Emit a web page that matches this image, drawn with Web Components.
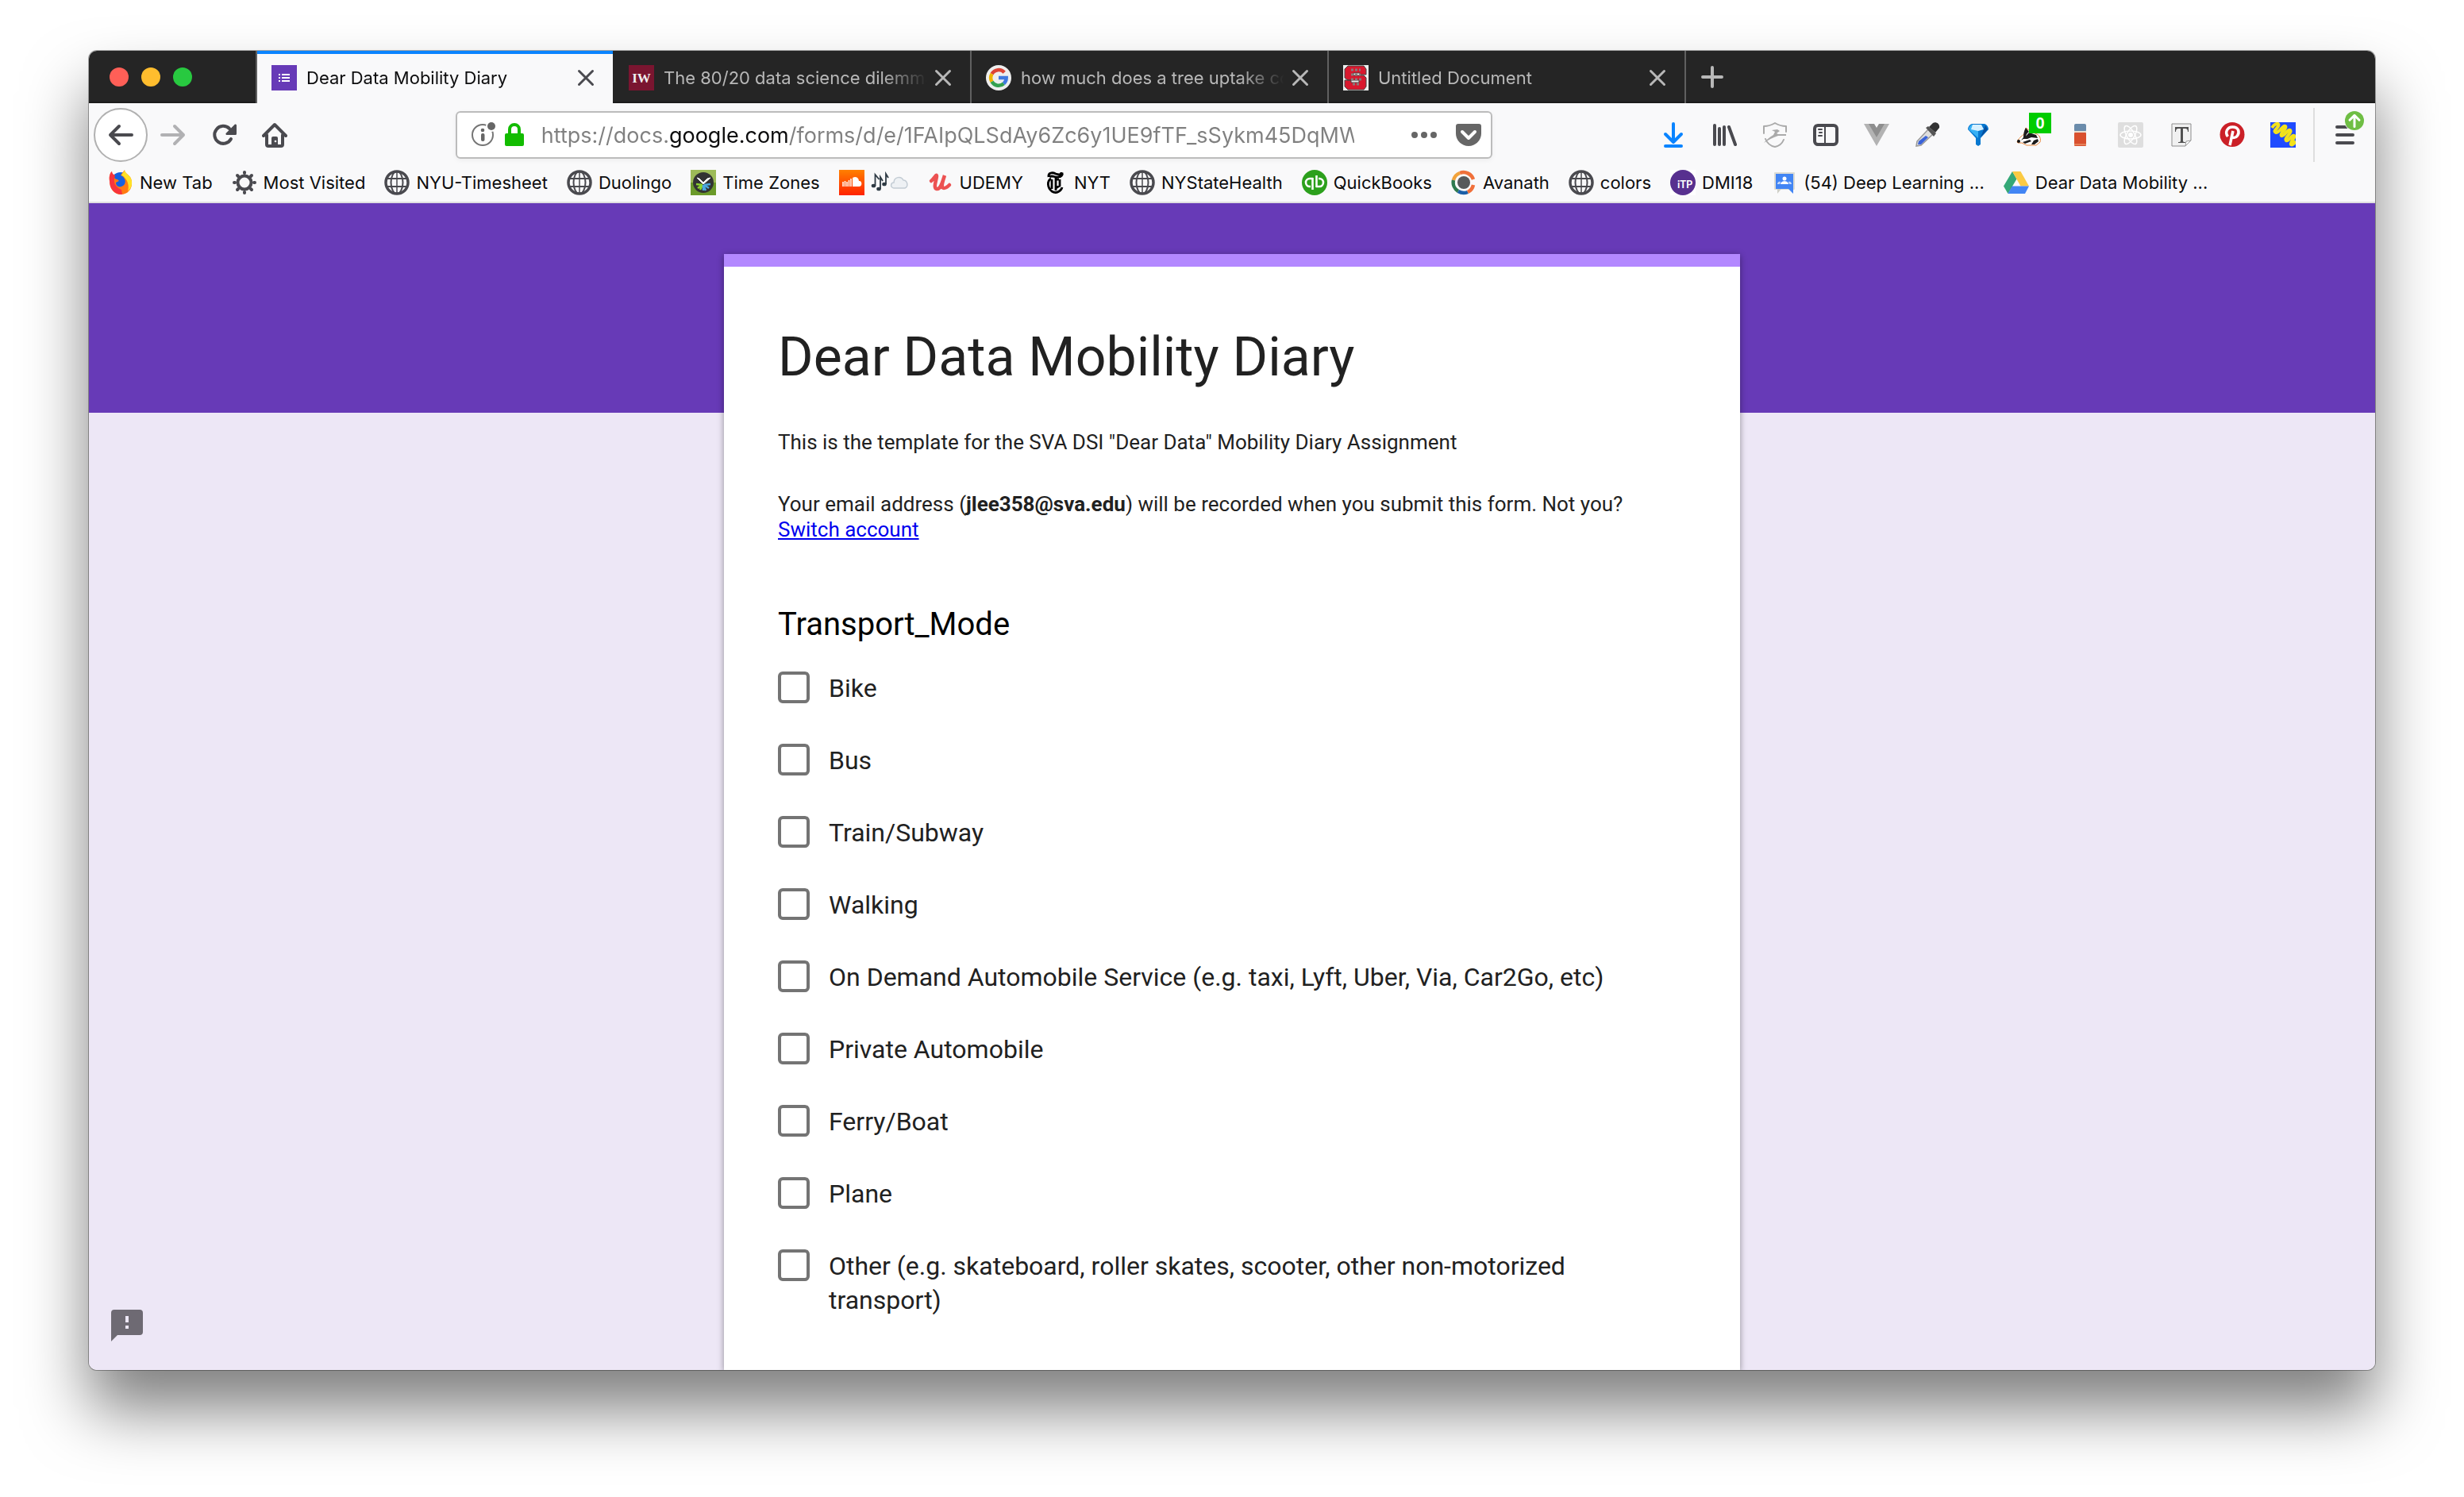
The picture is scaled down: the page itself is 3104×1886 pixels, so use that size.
<!DOCTYPE html>
<html lang="en">
<head>
<meta charset="utf-8">
<title>Dear Data Mobility Diary</title>
<style>
  html, body { margin: 0; height: 100%; background: #fff; }
  body { box-sizing: border-box; padding: 64px 112px 160px; overflow: hidden; font-family: Inter, "Liberation Sans", sans-serif; }
</style>
</head>
<body>
<browser-window>
  <tab-strip slot="tabs">
    <browser-tab icon="forms" active>Dear Data Mobility Diary</browser-tab>
    <browser-tab icon="iw">The 80/20 data science dilemma</browser-tab>
    <browser-tab icon="google">how much does a tree uptake co2</browser-tab>
    <browser-tab icon="wolf">Untitled Document</browser-tab>
  </tab-strip>
  <nav-bar slot="nav"></nav-bar>
  <bookmarks-bar slot="bookmarks">
    <bookmark-item icon="firefox">New Tab</bookmark-item>
    <bookmark-item icon="gear">Most Visited</bookmark-item>
    <bookmark-item icon="globe">NYU-Timesheet</bookmark-item>
    <bookmark-item icon="globe">Duolingo</bookmark-item>
    <bookmark-item icon="clock">Time Zones</bookmark-item>
    <bookmark-item icon="soundcloud"><ui-icon name="notes" wide></ui-icon></bookmark-item>
    <bookmark-item icon="udemy">UDEMY</bookmark-item>
    <bookmark-item icon="nyt">NYT</bookmark-item>
    <bookmark-item icon="globe">NYStateHealth</bookmark-item>
    <bookmark-item icon="qb">QuickBooks</bookmark-item>
    <bookmark-item icon="avanath">Avanath</bookmark-item>
    <bookmark-item icon="globe">colors</bookmark-item>
    <bookmark-item icon="itp">DMI18</bookmark-item>
    <bookmark-item icon="groups">(54) Deep Learning ...</bookmark-item>
    <bookmark-item icon="drive">Dear Data Mobility ...</bookmark-item>
  </bookmarks-bar>
  <forms-page>
    <form-card>
      <span slot="title">Dear Data Mobility Diary</span>
      <span slot="description">This is the template for the SVA DSI "Dear Data" Mobility Diary Assignment</span>
      <span slot="account">Your email address (<b>jlee358@sva.edu</b>) will be recorded when you submit this form. Not you? <a href="#switch">Switch account</a></span>
      <span slot="question">Transport_Mode</span>
      <check-option>Bike</check-option>
      <check-option>Bus</check-option>
      <check-option>Train/Subway</check-option>
      <check-option>Walking</check-option>
      <check-option>On Demand Automobile Service (e.g. taxi, Lyft, Uber, Via, Car2Go, etc)</check-option>
      <check-option>Private Automobile</check-option>
      <check-option>Ferry/Boat</check-option>
      <check-option>Plane</check-option>
      <check-option>Other (e.g. skateboard, roller skates, scooter, other non-motorized transport)</check-option>
    </form-card>
  </forms-page>
</browser-window>

<script>
const stroke = (d, w = 4, c = 'currentColor') =>
  `<path d="${d}" fill="none" stroke="${c}" stroke-width="${w}" stroke-linecap="round" stroke-linejoin="round"/>`;

const ICONS = {
  back: stroke('M30 16H3M14 5 3 16l11 11'),
  forward: stroke('M2 16h27M18 5l11 11-11 11'),
  reload: stroke('M25 21A11 11 0 1 1 23 8') + '<path d="M30 2.500a1.500 1.500 0 0 1 2 1.500v10.500a1.500 1.500 0 0 1-1.500 1.500H20a1.400 1.400 0 0 1-1-2.500z" fill="currentColor"/>',
  home: stroke('M2 17 16 3l14 14M6 16v12a2 2 0 0 0 2 2h16a2 2 0 0 0 2-2V16') + '<path d="M12 30V20a2 2 0 0 1 2-2h4a2 2 0 0 1 2 2v10z" fill="currentColor"/><circle cx="17" cy="24" r="1.300" fill="#f9f9fa"/>',
  close: stroke('M7.500 7.500l17 17M24.500 7.500l-17 17', 3),
  plus: stroke('M16 4v24M4 16h24', 4),
  info: '<circle cx="14" cy="16" r="13" fill="none" stroke="#757575" stroke-width="2"/><circle cx="14" cy="10" r="2.300" fill="#666"/><rect x="12" y="14" width="4.500" height="10" rx="2" fill="#666"/><circle cx="25" cy="5" r="7" fill="#fff"/><circle cx="25" cy="5" r="5" fill="#666"/>',
  lock: '<path d="M10 15V9a6 6 0 0 1 12 0v6" fill="none" stroke="#12bc00" stroke-width="4"/><rect x="4" y="14" width="24" height="16" rx="2" fill="#12bc00"/>',
  dots: '<g fill="#666"><circle cx="4" cy="16" r="4"/><circle cx="16" cy="16" r="4"/><circle cx="28" cy="16" r="4"/></g>',
  pocket: '<path d="M3 2h26a3 3 0 0 1 3 3v9a16 16 0 0 1-32 0V5a3 3 0 0 1 3-3z" fill="#666"/>' + stroke('M8 12l8 8 8-8', 4, '#fff'),
  download: stroke('M16 2v23M6 15l10 10 10-10M6 30h20', 4, '#0a84ff'),
  library: '<g fill="#4a4a4f"><rect x="2" y="2" width="4" height="28" rx="2"/><rect x="8" y="6" width="4" height="24" rx="2"/><rect x="14" y="4" width="4" height="26" rx="2"/></g>' + stroke('M22 6l8 22', 4, '#4a4a4f'),
  shield: stroke('M2 14V5c5 0 9-1 14-4 5 3 9 4 14 4v7M4 21c2 5 6 9 12 10 5-1 9-4 11-9', 2, '#aaa') + '<path d="M12 10l7-1 3 2-4 3 2 1h10v2H20c-6 2-12 5-18 9 3-4 7-7 12-10l2-4z" fill="#aaa"/>',
  sidebar: '<rect x="2" y="4" width="28" height="24" rx="4" fill="none" stroke="#4a4a4f" stroke-width="4"/><path d="M15 4v24" stroke="#4a4a4f" stroke-width="2"/>' + stroke('M7 9h4M8 13h3M7 17h4', 2, '#4a4a4f'),
  vue: '<path d="M0 2h12l4 7 4-7h12L16 30z" fill="#b3b3b3"/><path d="M6 2h7l3 5 3-5h7L16 19z" fill="#8e8e8e"/>',
  dropper: '<path d="M2 30l1-6L17 9l6 6L8 29z" fill="#ddd" stroke="#999" stroke-width="1.500"/><path d="M4 28l1-4 9-7 3 2-9 9z" fill="#3a63d8"/><path d="M14 7l3-2 10 9-3 4z" fill="#555"/><path d="M18 6l5-5c4-2 9 1 8 6l-5 6z" fill="#333"/>',
  gem: '<path d="M8 2h16c3 1 5 4 5 7l-10 11v8l-3 2-3-2v-8L3 9c0-3 2-6 5-7z" fill="#0878d0"/><path d="M8 3h8v17L4 9c0-3 2-5 4-6z" fill="#36b0f5"/><path d="M9 3h11l3 6-7 2-9-2z" fill="#d5f0ff"/><path d="M19 19l9-10-3-5z" fill="#0650a0"/>',
  badger: '<path d="M1 25c1-4 6-8 9-10l2-8 5 4 9 4c4 2 5 6 4 10l-5 4-12 0-6-3-5 0z" fill="#fff" stroke="#e8873a" stroke-width="1"/><path d="M9 19c0-5 1-9 3-12l4 5c-3 2-4 4-4 7l-6 4zM16 13l9 3 2 4-8-1-5 2-5 0zM8 25l9-3 2 2-8 3zM22 23l5-2 1 3-5 4-4 0z" fill="#1c1c1c"/><circle cx="3" cy="24" r="2" fill="#111"/>',
  eraser: '<rect x="9" y="2" width="15" height="10" rx="2" fill="#6b8cab"/><rect x="9" y="11" width="15" height="2" fill="#e9ddd0"/><rect x="9" y="13" width="15" height="17" rx="1" fill="#d9502e"/><path d="M9 28h15" stroke="#f0b080" stroke-width="1"/>',
  react: '<rect width="32" height="32" rx="2" fill="#dedede"/><g fill="none" stroke="#fff" stroke-width="1.500"><ellipse cx="16" cy="16" rx="13" ry="5"/><ellipse cx="16" cy="16" rx="13" ry="5" transform="rotate(60 16 16)"/><ellipse cx="16" cy="16" rx="13" ry="5" transform="rotate(120 16 16)"/></g><circle cx="16" cy="16" r="3" fill="#fff"/>',
  type: '<path d="M4 2h24v21l-7 7H4z" fill="#f1f1f1" stroke="#8d8d8d" stroke-width="1"/><path d="M28 23l-7 7 1-6z" fill="#fff" stroke="#999"/><path d="M8 6h17v6h-1c0-3-1-4-3-4h-3v15c0 2 1 2 3 2v1h-9v-1c2 0 3 0 3-2V8h-3c-2 0-3 1-3 4H8z" fill="#505050"/>',
  pinterest: '<circle cx="16" cy="15.500" r="15.500" fill="#cb2027"/><path d="M10.500 18c-4-5-1-12 6-12 8 0 9 7 6 11-2 3-6 3-7.500 1M17 11l-4 18" fill="none" stroke="#fff" stroke-width="3.500"/>',
  scribble: '<rect width="32" height="32" fill="#1f4bff"/><path d="M2 7C6 1 12 0 10 5 8 9 3 11 7 13c4 1 9-10 12-8 3 3-8 9-5 12 3 2 8-9 11-7 3 3-8 10-5 13 3 2 7-8 10-6 2 3-6 8-4 11 2 2 5-3 6-4" fill="none" stroke="#f3e21b" stroke-width="4" stroke-linejoin="round"/>',
  menu: stroke('M6 6h20M6 16h20M6 26h20', 4),
  up: '<circle cx="16" cy="16" r="16" fill="#6fbe44"/>' + stroke('M16 26V8M8 15l8-8 8 8', 4, '#fff'),
  feedback: '<path d="M8 4h32a4 4 0 0 1 4 4v24a4 4 0 0 1-4 4H12l-8 8V8a4 4 0 0 1 4-4z" fill="#6e6a73"/><path d="M22 12h4v8h-4zM22 24h4v4h-4z" fill="#ede7f6"/>',

  forms: '<rect width="32" height="32" fill="#673ab7"/><g fill="#fff"><rect x="9" y="11" width="2" height="2"/><rect x="9" y="15" width="2" height="2"/><rect x="9" y="19" width="2" height="2"/><rect x="13" y="11" width="10" height="2"/><rect x="13" y="15" width="10" height="2"/><rect x="13" y="19" width="10" height="2"/></g>',
  iw: '<rect width="32" height="32" fill="#7a1530"/><text x="16" y="22" font-family="Liberation Serif, serif" font-weight="700" font-size="17" text-anchor="middle" fill="#eee">IW</text>',
  google: '<circle cx="16" cy="16" r="16" fill="#eee"/><g fill="none" stroke-width="4.500"><path d="M23.200 9.200A9.800 9.800 0 0 0 7.500 11.100" stroke="#dd4436"/><path d="M7.500 11.100a9.800 9.800 0 0 0 0 9.800" stroke="#f0b400"/><path d="M7.500 20.900a9.800 9.800 0 0 0 15 2.400" stroke="#34a150"/><path d="M22.500 23.300A9.800 9.800 0 0 0 25.700 16H16" stroke="#4079e0"/></g>',
  wolf: '<rect width="32" height="32" fill="#eee"/><path d="M6 1h20l3 4v7h-8v-2h-8v3h13l3 3v11l-3 4H6l-4-4v-8h8v3h10v-3H6l-4-3V5z" fill="#d9182e" stroke="#444"/><path d="M10 6h12M10 12h12M10 18h14M12 24h9" stroke="#8a7a7a" stroke-width="3" stroke-dasharray="3 2"/>',
  firefox: '<circle cx="16" cy="16" r="13" fill="#1560e0"/><path d="M2 14C1 8 3 3 5 2c0 3 2 4 4 5-2 3 0 5 3 5l2 2-4 2c0 5 5 7 9 4 4-3 3-8 1-10-1-2-2-2-4-3 1-3 4-5 5-7 0 4 4 5 7 9 5 8 1 22-12 22C8 31 2 24 2 14z" fill="#ff7a12"/><path d="M21 0c0 4 4 5 7 9 4 7 2 14-3 18 2-7 0-13-4-17-1-2-2-2-4-3 1-3 4-5 4-7z" fill="#ffe226"/><path d="M2 14C1 8 3 3 5 2c0 3 2 4 4 5-3 8 0 15 8 18l1 6C8 31 2 24 2 14z" fill="#f5174f" opacity=".7"/>',
  gear: '<circle cx="16" cy="16" r="8.500" fill="none" stroke="#4a4a4f" stroke-width="4"/>' + stroke('M16 4V3M16 29v-1M4 16H3M29 16h-1M7 7l1 1M24 24l1 1M7 25l1-1M24 8l1-1', 4, '#4a4a4f'),
  globe: '<g fill="none" stroke="#4a4a4f"><circle cx="16" cy="16" r="14" stroke-width="3.500"/><ellipse cx="16" cy="16" rx="7.500" ry="14" stroke-width="2"/><path d="M16 2v28" stroke-width="1.500"/><path d="M4 11h24M4 21h24" stroke-width="2"/></g>',
  clock: '<rect width="32" height="32" fill="#6b9a2a"/><rect width="32" height="16" fill="#9dbb58"/><circle cx="16" cy="16" r="13" fill="#333"/><path d="M16 18L8 10l3 1 5 5 5-5 4-1z" fill="#fff" stroke="#fff"/><path d="M15 19l-8-1M15 19l-6 4M15 19l-3 6" stroke="#8bd42f" stroke-width="2.500"/><path d="M17 19l8-1M17 19l6 4M16 19l3 7M16 19v7" stroke="#4ba8e0" stroke-width="2.500"/>',
  soundcloud: '<defs><linearGradient id="s" x2="0" y2="1"><stop stop-color="#ff8000"/><stop offset="1" stop-color="#ff2200"/></linearGradient></defs><rect width="32" height="32" fill="url(#s)"/><path d="M5 15v6M7.500 14v7M10 15v6M12.500 13v8M15 11v10" stroke="#fff" stroke-width="1.500"/><path d="M17 10c5-3 8 1 8 4 4-1 5 7 0 7h-8z" fill="#fff"/>',
  notes: '<g fill="#2e3a44"><ellipse cx="3.500" cy="20" rx="2.800" ry="2.300"/><ellipse cx="10" cy="24" rx="2.800" ry="2.300"/><ellipse cx="17" cy="18" rx="2.800" ry="2.300"/></g><path d="M5.500 20V6l5 6M12 24V9l3 5M19 18V5l3 5" fill="none" stroke="#2e3a44" stroke-width="1.800"/><path d="M29 23c-5-1-4-7 0-7 0-7 9-9 12-3 5 0 7 8 2 10z" fill="#eef1f4" stroke="#c3ccd4" stroke-width="1.500"/>',
  udemy: '<path d="M4 14c4-3 7-10 7-6s-5 15 0 16c4 1 7-7 10-17-3 9-5 16-1 16 3 0 5-2 7-4" fill="none" stroke="#ec5252" stroke-width="4.500" stroke-linecap="round"/>',
  nyt: '<path d="M8 9c-1-6 5-6 9-4 3 1 7 2 7-2M9 9c3-3 7 1 11 0 4 0 6-3 5-5" fill="none" stroke="#000" stroke-width="2.800"/><path d="M11 11c-5 3-5 11 1 16 6 4 12-1 13-5M17 9v17M12 12v12M21 12h-4M22 12v8l-5 3" fill="none" stroke="#000" stroke-width="2.800"/>',
  qb: '<circle cx="16" cy="16" r="16" fill="#2ca01c"/><g fill="none" stroke="#fff" stroke-width="2.600"><path d="M14 11h-4a4.500 4.500 0 0 0 0 10h1M13.500 10v15M18 21h4a4.500 4.500 0 0 0 0-10h-1M18.500 22V7"/></g>',
  avanath: '<g fill="none" stroke-width="4.500"><path d="M28 12A13 13 0 0 0 11 4" stroke="#f0703a"/><path d="M11 4A13 13 0 0 0 3 13" stroke="#f2a33c"/><path d="M3 13a13 13 0 0 0 6 14" stroke="#2e7a4f"/><path d="M9 27a13 13 0 0 0 12 1" stroke="#1b5fa8"/><path d="M21 28a13 13 0 0 0 7-9" stroke="#f0703a"/></g><circle cx="16" cy="16" r="8" fill="#58595b"/>',
  itp: '<rect width="32" height="32" fill="#fff"/><circle cx="16" cy="16" r="16" fill="#57308f"/><text x="18.500" y="23" font-family="Lato, sans-serif" font-weight="700" font-size="13" text-anchor="middle" fill="#fff">iTP</text>',
  groups: '<rect x="3" y="3" width="26" height="22" rx="1" fill="#dcdcd4"/><path d="M5 5h22v25l-6-6H5z" fill="#4285f4"/><path d="M7 24v6l5-6z" fill="#cfcfc6"/><g fill="#fff"><circle cx="16" cy="11" r="2.500"/><path d="M11 18c0-5 10-5 10 0z"/><path d="M7 18c0-3 3-4 4-3l-1 3zM25 18c0-3-3-4-4-3l1 3z" opacity=".7"/></g>',
  drive: '<path d="M11 2l5.500 9.500L5.500 30 0 20.500z" fill="#34a877"/><path d="M11 2h10.500L32 20.500H21.500z" fill="#fbca43"/><path d="M11 20.500h21L27 30H5.500z" fill="#4285f4"/><path d="M11 20.500h-0.500L5.500 30z" fill="#2a66c8"/>'
};

// Registers an element whose open shadow root is cloned from one template.
function define(name, html, setup) {
  const template = document.createElement('template');
  template.innerHTML = html;
  customElements.define(name, class extends HTMLElement {
    constructor() {
      super();
      this.attachShadow({ mode: 'open' }).append(template.content.cloneNode(true));
    }
    connectedCallback() { if (setup) setup(this, this.shadowRoot); }
  });
}

const iconTemplate = document.createElement('template');
iconTemplate.innerHTML = `
  <style>
    :host { display: block; flex: none; width: 32px; height: 32px; }
    :host([wide]) { width: 48px; }
    :host([large]) { width: 48px; height: 48px; }
    :host([small]) { width: 24px; height: 24px; }
    svg { display: block; width: 100%; height: 100%; }
  </style><svg aria-hidden="true"></svg>`;

customElements.define('ui-icon', class extends HTMLElement {
  static observedAttributes = ['name'];
  constructor() {
    super();
    this.attachShadow({ mode: 'open' }).append(iconTemplate.content.cloneNode(true));
  }
  connectedCallback() { this.draw(); }
  attributeChangedCallback() { this.draw(); }
  draw() {
    const svg = this.shadowRoot.querySelector('svg');
    const width = this.hasAttribute('wide') || this.hasAttribute('large') ? 48 : 32;
    svg.setAttribute('viewBox', `0 0 ${width} ${this.hasAttribute('large') ? 48 : 32}`);
    svg.innerHTML = ICONS[this.getAttribute('name')] || '';
  }
});

define('browser-window', `
  <style>
    :host { display: flex; flex-direction: column; height: 100%; border-radius: 10px; overflow: hidden; background: #f9f9fa;
      box-shadow: 0 0 0 1px rgba(0,0,0,.32), 0 50px 80px rgba(0,0,0,.5); }
    slot { display: block; flex: none; }
    .page { display: flex; flex: 1; min-height: 0; }
  </style>
  <slot name="tabs"></slot><slot name="nav"></slot><slot name="bookmarks"></slot>
  <slot class="page"></slot>`);

define('tab-strip', `
  <style>
    :host { display: flex; height: 66px; background: #252525; color: #b8b8b8; box-shadow: inset 0 -2px #1c1c1c; }
    .lights { display: flex; flex: none; align-items: center; gap: 16px; box-sizing: border-box; width: 210px; padding-left: 26px; }
    .lights button { width: 24px; height: 24px; border: 0; border-radius: 50%; padding: 0; }
    .red { background: #ff5f57; } .yellow { background: #ffbd2e; } .green { background: #28c940; }
    .add { display: flex; align-items: center; justify-content: center; width: 68px; border: 0; border-left: 2px solid #606060; padding: 0; background: none; color: inherit; }
  </style>
  <div class="lights"><button class="red" aria-label="Close window"></button><button class="yellow" aria-label="Minimize"></button><button class="green" aria-label="Zoom"></button></div>
  <slot></slot>
  <button class="add" aria-label="New tab"><ui-icon name="plus"></ui-icon></button>`);

define('browser-tab', `
  <style>
    :host { display: flex; align-items: center; gap: 12px; box-sizing: border-box; width: 450px; padding: 2px 14px 0 18px; border-left: 2px solid #606060; font-size: 22px; }
    :host([active]) { background: #f9f9fa; color: #0c0c0d; box-shadow: inset 0 4px #0a84ff; }
    :host([icon="iw"]) { border-color: transparent; }
    .title { flex: 1; overflow: hidden; white-space: nowrap; -webkit-mask-image: linear-gradient(90deg, #000 calc(100% - 56px), transparent); mask-image: linear-gradient(90deg, #000 calc(100% - 56px), transparent); }
    button { display: flex; justify-content: center; width: 40px; margin-left: -12px; border: 0; padding: 0; background: none; color: inherit; }
    :host([active]) button { color: #4a4a4f; }
  </style>
  <ui-icon></ui-icon><div class="title"><slot></slot></div>
  <button aria-label="Close tab"><ui-icon name="close"></ui-icon></button>`,
  (el, root) => root.querySelector('ui-icon').setAttribute('name', el.getAttribute('icon')));

define('nav-bar', `
  <style>
    :host { display: flex; align-items: center; box-sizing: border-box; height: 80px; padding-left: 6px; color: #4a4a4f; }
    button { position: relative; display: flex; flex: none; align-items: center; justify-content: center; box-sizing: border-box; width: 64px; height: 68px; border: 0; padding: 0; background: none; color: inherit; }
    .back { width: 68px; border: 2px solid #b1b1b1; border-radius: 50%; background: #fff; }
    .forward { color: #b1b1b3; }
    i { flex: 2; }
    url-bar { flex: 13; min-width: 0; }
    .count { position: absolute; left: 32px; top: 6px; width: 28px; height: 26px; background: #00cc00; color: #fff; font-size: 20px; font-weight: 700; line-height: 26px; text-align: center; }
    .menu { width: 78px; margin-left: 6px; border-left: 2px solid #dedede; }
    .badge { position: absolute; left: 38px; top: 4px; border-radius: 50%; box-shadow: 0 0 0 1px #f9f9fa; }
  </style>
  <button class="back" aria-label="Back"><ui-icon name="back"></ui-icon></button>
  <button class="forward" aria-label="Forward"><ui-icon name="forward"></ui-icon></button>
  <button aria-label="Reload"><ui-icon name="reload"></ui-icon></button>
  <button aria-label="Home"><ui-icon name="home"></ui-icon></button>
  <i></i><url-bar></url-bar><i></i>
  <button aria-label="Downloads"><ui-icon name="download"></ui-icon></button>
  <button aria-label="Library"><ui-icon name="library"></ui-icon></button>
  <button aria-label="Shield"><ui-icon name="shield"></ui-icon></button>
  <button aria-label="Sidebar"><ui-icon name="sidebar"></ui-icon></button>
  <button aria-label="Vue"><ui-icon name="vue"></ui-icon></button>
  <button aria-label="Color picker"><ui-icon name="dropper"></ui-icon></button>
  <button aria-label="Gem"><ui-icon name="gem"></ui-icon></button>
  <button aria-label="Privacy Badger"><ui-icon name="badger"></ui-icon><span class="count">0</span></button>
  <button aria-label="Eraser"><ui-icon name="eraser"></ui-icon></button>
  <button aria-label="React"><ui-icon name="react"></ui-icon></button>
  <button aria-label="Fonts"><ui-icon name="type"></ui-icon></button>
  <button aria-label="Pinterest"><ui-icon name="pinterest"></ui-icon></button>
  <button aria-label="Highlighter"><ui-icon name="scribble"></ui-icon></button>
  <button class="menu" aria-label="Menu"><ui-icon name="menu"></ui-icon><ui-icon class="badge" name="up" small></ui-icon></button>`);

define('url-bar', `
  <style>
    :host { display: flex; align-items: center; box-sizing: border-box; height: 60px; padding: 0 12px 0 18px; border: 2px solid #bcbcbc; border-radius: 6px; background: #fff; box-shadow: 0 2px 6px rgba(0,0,0,.05); }
    .lock { margin: 0 18px 0 6px; }
    input { flex: 1; min-width: 0; height: 48px; margin-right: 72px; border: 0; padding: 0; outline: 0; font: 27px Inter, "Liberation Sans", sans-serif;
      background: linear-gradient(90deg, #808080 var(--from, 0px), #0c0c0d var(--from, 0px) var(--to, 0px), #808080 var(--to, 0px));
      -webkit-background-clip: text; background-clip: text; -webkit-text-fill-color: transparent; }
    .dots { margin-right: 24px; }
  </style>
  <ui-icon name="info"></ui-icon><ui-icon class="lock" name="lock"></ui-icon>
  <input type="text" aria-label="Address" value="https://docs.google.com/forms/d/e/1FAIpQLSdAy6Zc6y1UE9fTF_sSykm45DqMW">
  <ui-icon class="dots" name="dots"></ui-icon><ui-icon name="pocket"></ui-icon>`,
  (el, root) => {
    // The registered domain is darker than the rest of the address.
    const input = root.querySelector('input');
    const pen = document.createElement('canvas').getContext('2d');
    pen.font = getComputedStyle(input).font;
    input.style.setProperty('--from', pen.measureText('https://docs.').width + 'px');
    input.style.setProperty('--to', pen.measureText('https://docs.google.com').width + 'px');
  });

define('bookmarks-bar', `
  <style>
    :host { display: flex; align-items: center; gap: 24px; box-sizing: border-box; height: 46px; padding: 0 24px 4px; border-bottom: 2px solid #e0e0e1; white-space: nowrap; }
  </style><slot></slot>`);

define('bookmark-item', `
  <style>
    :host { display: block; flex: none; }
    a { display: flex; align-items: center; gap: 8px; color: #0c0c0d; font-size: 22px; text-decoration: none; }
  </style><a href="#"><ui-icon></ui-icon><span><slot></slot></span></a>`,
  (el, root) => root.querySelector('ui-icon').setAttribute('name', el.getAttribute('icon')));

define('forms-page', `
  <style>
    :host { position: relative; display: flex; flex: 1; align-items: stretch; justify-content: center; padding-top: 64px; background: linear-gradient(#673ab7 264px, #ede7f6 0); font-family: Roboto, "Liberation Sans", sans-serif; }
    .feedback { position: absolute; left: 24px; bottom: 32px; border: 0; padding: 0; background: none; }
  </style>
  <slot></slot>
  <button class="feedback" aria-label="Report a problem"><ui-icon name="feedback" large></ui-icon></button>`);

define('form-card', `
  <style>
    :host { display: block; box-sizing: border-box; width: 1280px; max-width: 100%; padding: 68px 68px 0; border-top: 16px solid #b388ff; background: #fff; color: #212121; box-shadow: 0 2px 8px rgba(0,0,0,.4); }
    h1, h2, p { margin: 0; font-weight: 400; }
    h1 { font-size: 68px; line-height: 92px; }
    p { margin-top: 45px; font-size: 26px; line-height: 32px; }
    p + p { margin-top: 46px; }
    h2 { margin: 76px 0 31px; color: #000; font-size: 40px; line-height: 56px; }
    .options { display: flex; flex-direction: column; gap: 48px; }
    ::slotted(span) { display: block; }
  </style>
  <h1><slot name="title"></slot></h1>
  <p><slot name="description"></slot></p>
  <p><slot name="account"></slot></p>
  <h2><slot name="question"></slot></h2>
  <div class="options" role="group"><slot></slot></div>`);

define('check-option', `
  <style>
    :host { display: block; }
    label { display: flex; align-items: flex-start; gap: 24px; padding-right: 24px; font-size: 32px; line-height: 43px; }
    input { flex: none; -webkit-appearance: none; appearance: none; box-sizing: border-box; width: 40px; height: 40px; margin: 0; border: 4px solid #747474; border-radius: 6px; background: #fff; }
  </style><label><input type="checkbox"><span><slot></slot></span></label>`);
</script>
</body>
</html>
